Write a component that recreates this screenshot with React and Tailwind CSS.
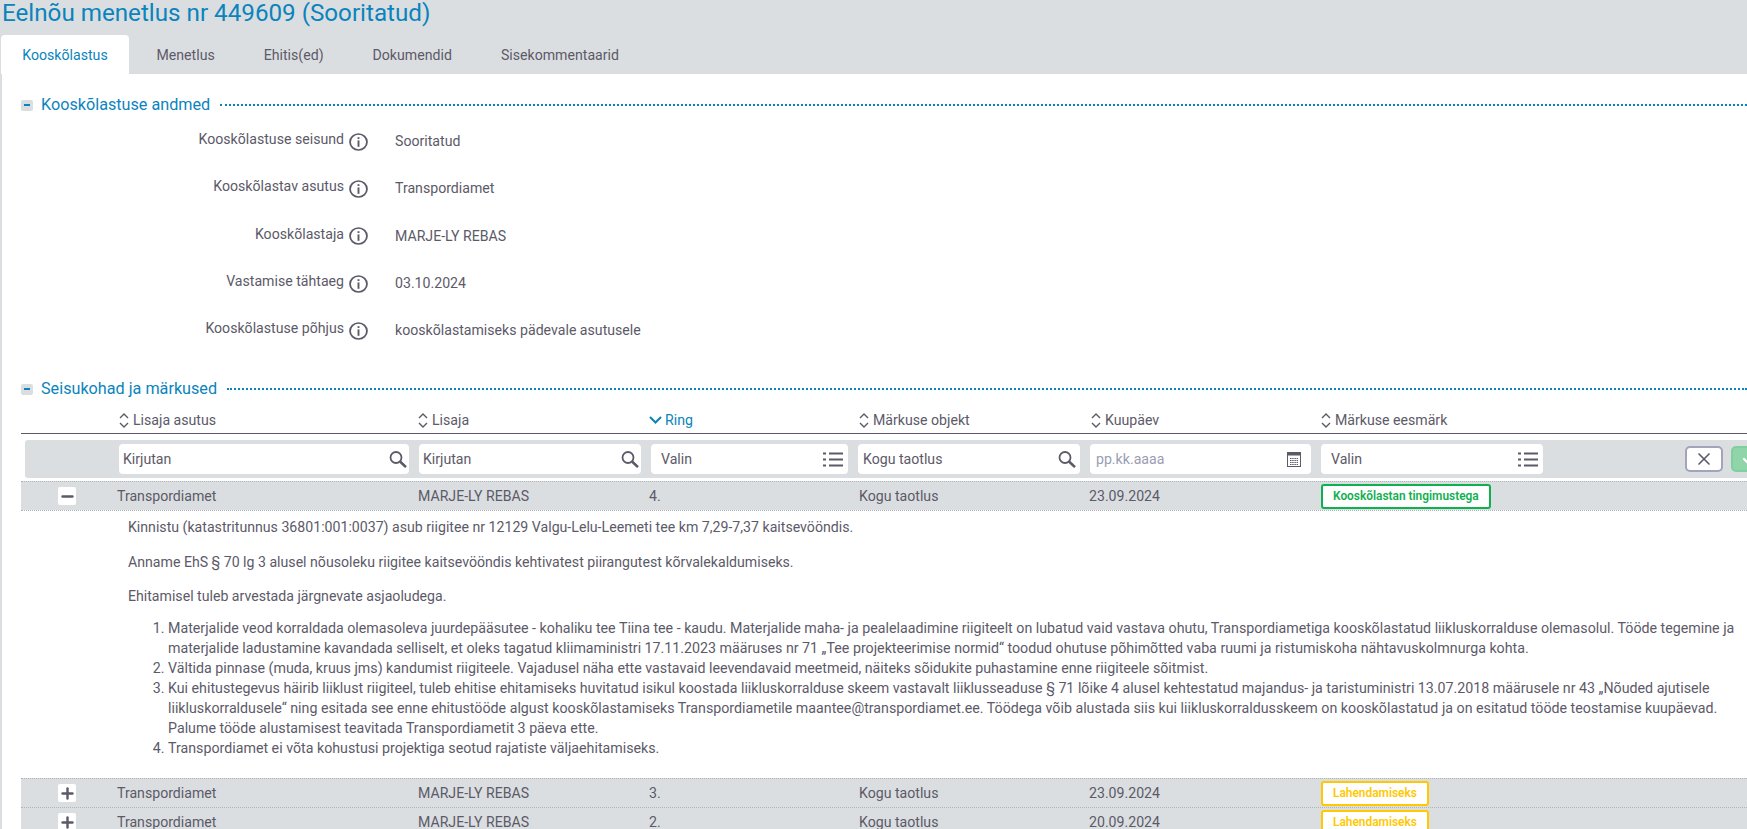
import React from "react";
import { Minus, Plus, X, Check } from "lucide-react";

const tabs = ["Kooskõlastus", "Menetlus", "Ehitis(ed)", "Dokumendid", "Sisekommentaarid"];

const fields = [
  ["Kooskõlastuse seisund", "Sooritatud"],
  ["Kooskõlastav asutus", "Transpordiamet"],
  ["Kooskõlastaja", "MARJE-LY REBAS"],
  ["Vastamise tähtaeg", "03.10.2024"],
  ["Kooskõlastuse põhjus", "kooskõlastamiseks pädevale asutusele"],
];

const InfoIcon = () => (
  <svg width="19" height="18" viewBox="0 0 18 18" preserveAspectRatio="none" fill="none" className="shrink-0">
    <circle cx="9" cy="9" r="8" stroke="#5c5a68" strokeWidth="1.7" />
    <rect x="8.1" y="7.4" width="1.8" height="6.4" fill="#5c5a68" />
    <rect x="8.1" y="4.2" width="1.8" height="1.8" fill="#5c5a68" />
  </svg>
);

const SortIcon = ({ active }) =>
  active ? (
    <svg width="13" height="8" viewBox="0 0 13 8" fill="none" stroke="#0a84bd" strokeWidth="2" className="mr-[3px]">
      <path d="M1 1l5.5 5.5L12 1" />
    </svg>
  ) : (
    <svg width="10" height="15" viewBox="0 0 10 15" fill="none" stroke="#5c5a68" strokeWidth="1.4" className="mr-[4px]">
      <path d="M1 5l4-4 4 4" />
      <path d="M1 10l4 4 4-4" />
    </svg>
  );

const SectionTitle = ({ title }) => (
  <div className="flex items-center h-[24px]">
    <div className="w-[12px] h-[11px] mr-[8px] bg-[#dbdee1] rounded-[2px] flex items-center justify-center">
      <div className="w-[6px] h-[2px] bg-[#0a84bd]" />
    </div>
    <span className="text-[16.2px] text-[#0a84bd] whitespace-nowrap">{title}</span>
    <div className="flex-1 ml-[10px] border-t-2 border-dotted border-[#0a84bd]" />
  </div>
);

const Header = ({ className, label, active }) => (
  <div className={`flex items-center ${className}`}>
    <SortIcon active={active} />
    <span className={active ? "text-[#0a84bd]" : ""}>{label}</span>
  </div>
);

const Filter = ({ className, value, icon, muted }) => (
  <div className={`h-[30px] bg-white rounded-[4px] flex items-center justify-between shrink-0 ${className}`}>
    <span className={muted ? "text-[#9a9db4]" : ""}>{value}</span>
    {icon}
  </div>
);

const CalendarIcon = () => (
  <svg width="14" height="15" viewBox="0 0 14 15" fill="none">
    <rect x="0.5" y="0.5" width="13" height="14" stroke="#5c5a68" />
    <rect x="0.5" y="0.5" width="13" height="3" fill="#5c5a68" />
    <path d="M3 6.5h8M3 8.5h8M3 10.5h8M3 12.5h8" stroke="#5c5a68" strokeDasharray="1.5 0.7" />
  </svg>
);

const SearchIcon = () => (
  <svg width="18" height="17" viewBox="0 0 18 17" fill="none" stroke="#5c5a68">
    <circle cx="7" cy="6.5" r="5.5" strokeWidth="1.8" />
    <path d="M11 10.5l6 5.6" strokeWidth="2.6" />
  </svg>
);

const ListIcon = () => (
  <svg width="20" height="15" viewBox="0 0 20 15" fill="#5c5a68">
    <rect x="0" y="0.5" width="3" height="2" />
    <rect x="6" y="0.5" width="14" height="2" />
    <rect x="0" y="6.5" width="3" height="2" />
    <rect x="6" y="6.5" width="14" height="2" />
    <rect x="0" y="12.5" width="3" height="2" />
    <rect x="6" y="12.5" width="14" height="2" />
  </svg>
);

const Row = ({ open, asutus, lisaja, ring, objekt, date, badge, green }) => (
  <div className="flex items-center h-[29px] bg-[#dbdee1] border-t border-dotted border-[#b0b3b7]">
    <div className="w-[96px] pl-[37px] shrink-0">
      <div className="w-[18px] h-[18px] bg-white rounded-[2px] flex items-center justify-center">
        {open ? (
          <Minus size={17} strokeWidth={3.4} className="text-[#5c5a68]" />
        ) : (
          <Plus size={17} strokeWidth={3.4} className="text-[#5c5a68]" />
        )}
      </div>
    </div>
    <div className="w-[301px] shrink-0">{asutus}</div>
    <div className="w-[231px] shrink-0">{lisaja}</div>
    <div className="w-[210px] shrink-0">{ring}</div>
    <div className="w-[230px] shrink-0">{objekt}</div>
    <div className="w-[232px] shrink-0">{date}</div>
    <div
      className={`h-[25px] px-[10px] flex items-center bg-white rounded-[3px] border-2 text-[11.9px] font-semibold whitespace-nowrap ${
        green ? "border-[#0fb04f] text-[#0fb04f]" : "border-[#ffc800] text-[#ffc800]"
      }`}
    >
      {badge}
    </div>
  </div>
);

export default function App() {
  return (
    <div className="h-[829px] w-[1747px] overflow-hidden bg-white text-[#5c5a68] text-[14.13px] font-['Roboto',sans-serif]">
      <div className="bg-[#dbdee1] h-[74px]">
        <h1 className="text-[24.2px] leading-[26px] pl-[2px] text-[#0a84bd]">Eelnõu menetlus nr 449609 (Sooritatud)</h1>
        <div className="flex mt-[9px] pl-[1px]">
          {tabs.map((t, i) => (
            <div
              key={t}
              className={
                i === 0
                  ? "h-[39px] w-[128px] mr-[3px] pt-[3px] flex items-center justify-center bg-white rounded-t-[4px] text-[#0a84bd]"
                  : "h-[39px] px-[24.5px] pt-[3px] flex items-center"
              }
            >
              {t}
            </div>
          ))}
        </div>
      </div>

      <div className="border-l-2 border-[#dbdee1] pl-[19px] h-[755px]">
        <div className="pt-[19px]">
          <SectionTitle title="Kooskõlastuse andmed" />
        </div>

        <div className="mt-[1px]">
          {fields.map(([label, value]) => (
            <div key={label} className="flex items-center h-[47.3px]">
              <div className="w-[347px] flex justify-end items-center gap-[5px]">
                <span className="mb-[4px]">{label}</span>
                <InfoIcon />
              </div>
              <div className="ml-[27px]">{value}</div>
            </div>
          ))}
        </div>

        <div className="mt-[23px]">
          <SectionTitle title="Seisukohad ja märkused" />
        </div>

        <div className="flex items-center h-[33px] pt-[6px] border-b border-[#5c5a68] pl-[98px]">
          <Header className="w-[299px]" label="Lisaja asutus" />
          <Header className="w-[231px]" label="Lisaja" />
          <Header className="w-[210px]" label="Ring" active />
          <Header className="w-[232px]" label="Märkuse objekt" />
          <Header className="w-[230px]" label="Kuupäev" />
          <Header className="w-[200px]" label="Märkuse eesmärk" />
        </div>

        <div className="flex items-center gap-[10px] h-[38px] mt-[6px] ml-[4px] bg-[#dbdee1] rounded-l-[3px] pl-[94px] overflow-hidden">
          <Filter className="w-[290px] pl-[4px] pr-[2px]" value="Kirjutan" icon={<SearchIcon />} />
          <Filter className="w-[222px] pl-[4px] pr-[2px]" value="Kirjutan" icon={<SearchIcon />} />
          <Filter className="w-[197px] pl-[10px] pr-[5px]" value="Valin" icon={<ListIcon />} />
          <Filter className="w-[222px] pl-[5px] pr-[4px]" value="Kogu taotlus" icon={<SearchIcon />} />
          <Filter className="w-[221px] pl-[6px] pr-[10px]" value="pp.kk.aaaa" muted icon={<CalendarIcon />} />
          <Filter className="w-[222px] pl-[10px] pr-[5px]" value="Valin" icon={<ListIcon />} />
          <div className="w-[38px] h-[26px] ml-[132px] shrink-0 bg-white border-2 border-[#a3a3bb] rounded-[5px] flex items-center justify-center">
            <X size={20} strokeWidth={2} />
          </div>
          <div className="w-[38px] h-[26px] -ml-[2px] shrink-0 bg-[#90d4a9] border-2 border-[#7fd09c] rounded-[5px] flex items-center justify-center">
            <Check size={18} strokeWidth={3} className="text-white" />
          </div>
        </div>

        <div className="mt-[3px]">
          <Row open asutus="Transpordiamet" lisaja="MARJE-LY REBAS" ring="4." objekt="Kogu taotlus" date="23.09.2024" badge="Kooskõlastan tingimustega" green />
        </div>

        <div className="pl-[107px] pt-[6px] h-[268px] leading-[20px] border-t border-dotted border-[#b0b3b7]">
          <p className="text-[14.15px]">Kinnistu (katastritunnus 36801:001:0037) asub riigitee nr 12129 Valgu-Lelu-Leemeti tee km 7,29-7,37 kaitsevööndis.</p>
          <p className="mt-[15px]">Anname EhS § 70 lg 3 alusel nõusoleku riigitee kaitsevööndis kehtivatest piirangutest kõrvalekaldumiseks.</p>
          <p className="mt-[14px]">Ehitamisel tuleb arvestada järgnevate asjaoludega.</p>
          <ol className="list-decimal mt-[12px] pl-[40px] pr-[8px] text-[14.23px]">
            <li>Materjalide veod korraldada olemasoleva juurdepääsutee - kohaliku tee Tiina tee - kaudu. Materjalide maha- ja pealelaadimine riigiteelt on lubatud vaid vastava ohutu, Transpordiametiga kooskõlastatud liikluskorralduse olemasolul. Tööde tegemine ja materjalide ladustamine kavandada selliselt, et oleks tagatud kliimaministri 17.11.2023 määruses nr 71 „Tee projekteerimise normid“ toodud ohutuse põhimõtted vaba ruumi ja ristumiskoha nähtavuskolmnurga kohta.</li>
            <li>Vältida pinnase (muda, kruus jms) kandumist riigiteele. Vajadusel näha ette vastavaid leevendavaid meetmeid, näiteks sõidukite puhastamine enne riigiteele sõitmist.</li>
            <li>Kui ehitustegevus häirib liiklust riigiteel, tuleb ehitise ehitamiseks huvitatud isikul koostada liikluskorralduse skeem vastavalt liiklusseaduse § 71 lõike 4 alusel kehtestatud majandus- ja taristuministri 13.07.2018 määrusele nr 43 „Nõuded ajutisele liikluskorraldusele“ ning esitada see enne ehitustööde algust kooskõlastamiseks Transpordiametile maantee@transpordiamet.ee. Töödega võib alustada siis kui liikluskorraldusskeem on kooskõlastatud ja on esitatud tööde teostamise kuupäevad. Palume tööde alustamisest teavitada Transpordiametit 3 päeva ette.</li>
            <li>Transpordiamet ei võta kohustusi projektiga seotud rajatiste väljaehitamiseks.</li>
          </ol>
        </div>

        <Row asutus="Transpordiamet" lisaja="MARJE-LY REBAS" ring="3." objekt="Kogu taotlus" date="23.09.2024" badge="Lahendamiseks" />
        <Row asutus="Transpordiamet" lisaja="MARJE-LY REBAS" ring="2." objekt="Kogu taotlus" date="20.09.2024" badge="Lahendamiseks" />
      </div>
    </div>
  );
}
